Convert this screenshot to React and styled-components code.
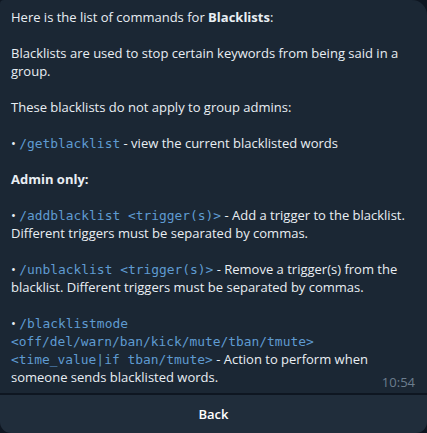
import React from 'react';
import styled, { createGlobalStyle } from 'styled-components';

const Global = createGlobalStyle`
  html, body {
    margin: 0;
    padding: 0;
    background: #0e1621;
    width: 427px;
    height: 433px;
    overflow: hidden;
  }
`;

const Wrap = styled.div`
  display: flex;
  flex-direction: column;
  gap: 2px;
  width: 427px;
  font-family: "Open Sans", "Noto Sans", sans-serif;
  font-size: 13px;
  color: #e9eef3;
`;

const Bubble = styled.div`
  position: relative;
  background: #1b2734;
  border-radius: 4px 15px 0 0;
  padding: 8px 14px 7px 11px;
  line-height: 18px;
`;

const Para = styled.p`
  margin: 0 0 18px 0;
  &:last-of-type {
    margin-bottom: 0;
  }
`;

const Cmd = styled.span`
  font-family: "DejaVu Sans Mono", monospace;
  font-size: 12.9px;
  line-height: 0;
  color: #5f9bd1;
`;

const Time = styled.span`
  position: absolute;
  right: 12px;
  bottom: 2px;
  font-size: 13px;
  color: #6c7d8e;
`;

const BackButton = styled.button`
  height: 38px;
  border: none;
  background: #202d3b;
  border-radius: 0 0 11px 11px;
  color: #ffffff;
  font-family: "Open Sans", "Noto Sans", sans-serif;
  font-weight: 600;
  font-size: 13px;
`;

export default function App() {
  return (
    <Wrap>
      <Global />
      <Bubble>
        <Para>Here is the list of commands for <b>Blacklists</b>:</Para>
        <Para>Blacklists are used to stop certain keywords from being said in a group.</Para>
        <Para>These blacklists do not apply to group admins:</Para>
        <Para>• <Cmd>/getblacklist</Cmd> - view the current blacklisted words</Para>
        <Para><b>Admin only:</b></Para>
        <Para>• <Cmd>/addblacklist &lt;trigger(s)&gt;</Cmd> - Add a trigger to the blacklist. Different triggers must be separated by commas.</Para>
        <Para>• <Cmd>/unblacklist &lt;trigger(s)&gt;</Cmd> - Remove a trigger(s) from the blacklist. Different triggers must be separated by commas.</Para>
        <Para>• <Cmd>/blacklistmode &lt;off/del/warn/ban/kick/mute/tban/tmute&gt; &lt;time_value|if tban/tmute&gt;</Cmd> - Action to perform when someone sends blacklisted words.</Para>
        <Time>10:54</Time>
      </Bubble>
      <BackButton>Back</BackButton>
    </Wrap>
  );
}
